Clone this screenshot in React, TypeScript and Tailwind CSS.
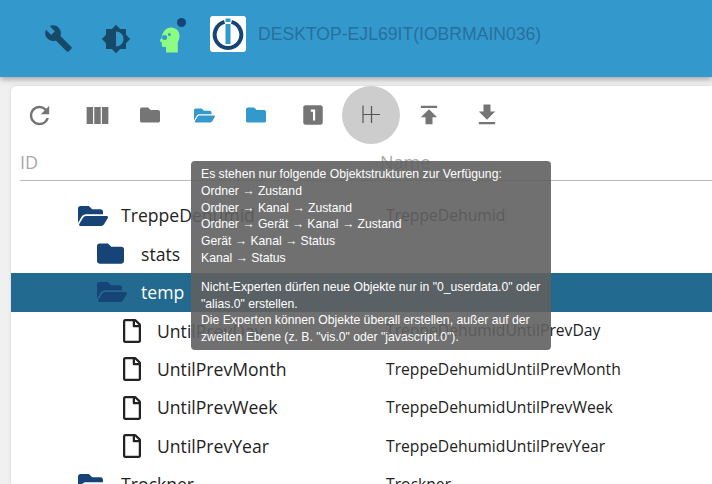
import { FaFolder, FaFolderOpen, FaRegFile } from "react-icons/fa";
import { MdRefresh, MdViewColumn, MdLooksOne, MdPublish, MdGetApp, MdBuild, MdBrightnessMedium } from "react-icons/md";

type RowT = { name: string; value?: string; kind: "open" | "folder" | "file"; level: 0 | 1 | 2; selected?: boolean };

const rows: RowT[] = [
  { name: "TreppeDehumid", value: "TreppeDehumid", kind: "open", level: 0 },
  { name: "stats", kind: "folder", level: 1 },
  { name: "temp", kind: "open", level: 1, selected: true },
  { name: "UntilPrevDay", value: "TreppeDehumidUntilPrevDay", kind: "file", level: 2 },
  { name: "UntilPrevMonth", value: "TreppeDehumidUntilPrevMonth", kind: "file", level: 2 },
  { name: "UntilPrevWeek", value: "TreppeDehumidUntilPrevWeek", kind: "file", level: 2 },
  { name: "UntilPrevYear", value: "TreppeDehumidUntilPrevYear", kind: "file", level: 2 },
  { name: "Trockner", value: "Trockner", kind: "open", level: 0 },
];

function RowIcon({ r }: { r: RowT }) {
  if (r.kind === "file") return <FaRegFile className="w-[24px] h-[24px] text-[#222]" />;
  if (r.kind === "folder") return <FaFolder className="w-[27px] h-[27px] text-[#164477]" />;
  return <FaFolderOpen className="w-[30px] h-[30px] text-[#164477]" />;
}

function Row({ r }: { r: RowT }) {
  const pad = r.level === 0 ? "pl-[67px]" : r.level === 1 ? "pl-[86px]" : "pl-[109px]";
  const iconW = r.level === 0 ? "w-[43px]" : r.level === 1 ? "w-[44px]" : "w-[37px]";
  return (
    <div className={`flex items-center h-[38.4px] shrink-0 ${r.selected ? "bg-[#226a8f] text-white" : "text-[#222]"}`}>
      <div className={`flex items-center w-[375px] shrink-0 ${pad}`}>
        <span className={`flex items-center shrink-0 ${iconW}`}><RowIcon r={r} /></span>
        <span className="text-[17.6px] font-['Open_Sans',sans-serif] whitespace-nowrap">{r.name}</span>
      </div>
      <span className="mt-[1px] text-[15.7px] font-['Open_Sans',sans-serif] whitespace-nowrap">{r.value}</span>
    </div>
  );
}

function ExpertHead() {
  return (
    <span className="relative flex w-[30px] h-[30px] items-center justify-center">
      <svg viewBox="0 0 20 26" className="w-[20px] h-[26px]">
        <path d="M6 25.5V20H3c-.8 0-1.2-.6-1.2-1.4v-3.2L.2 14.6 0 12.6l1.6-1C2 5 6 .5 11 .5c5 0 8.5 3.6 8.5 8.2 0 3.2-1 5.4-1.7 6.6V25.5z" fill="#8cfc83" />
        <circle cx="4.6" cy="10.6" r="2.5" fill="#3399cc" />
        <circle cx="9.4" cy="7.4" r="1.5" fill="#3399cc" />
      </svg>
      <span className="absolute left-[22px] top-[-7px] w-[9px] h-[9px] rounded-full bg-[#164477]" />
    </span>
  );
}

function Logo() {
  return (
    <span className="flex items-center justify-center w-[36px] h-[36px] rounded-[3px] bg-white">
      <svg viewBox="0 0 36 36" className="w-[36px] h-[36px]">
        <path d="M14.5 5.9A13.3 13.3 0 1 0 21.5 5.9" fill="none" stroke="#164477" strokeWidth="4" />
        <rect x="15.5" y="2.5" width="5" height="3.5" fill="#3399cc" />
        <rect x="15.5" y="8" width="5" height="20" fill="#3399cc" />
      </svg>
    </span>
  );
}

function ToolBtn({ children, w = "w-[58px]" }: { children: React.ReactNode; w?: string }) {
  return <button className={`flex items-center justify-center h-[58px] shrink-0 ${w}`}>{children}</button>;
}

const line = ["Ordner → Zustand", "Ordner → Kanal → Zustand", "Ordner → Gerät → Kanal → Zustand", "Gerät → Kanal → Status", "Kanal → Status"];

export default function App() {
  return (
    <div className="relative w-[712px] h-[484px] overflow-hidden bg-[#f0f0f0] font-['Liberation_Sans',sans-serif]">
      <header className="relative z-10 flex items-center h-[77px] pl-[29px] pb-[5px] bg-[#3399cc] shadow-[0_2px_6px_rgba(0,0,0,0.35)]">
        <span className="flex w-[58px] justify-center mt-[5px]"><MdBuild className="w-[29px] h-[29px] text-[#164a68]" /></span>
        <span className="flex w-[58px] justify-center mt-[5px]"><MdBrightnessMedium className="w-[30px] h-[30px] text-[#164a68]" /></span>
        <span className="flex w-[50px] justify-center mt-[7px]"><ExpertHead /></span>
        <span className="ml-[15px] mt-[-5px]"><Logo /></span>
        <span className="ml-[12px] mt-[-3px] text-[17.6px] text-[#27709c] whitespace-nowrap">DESKTOP-EJL69IT(IOBRMAIN036)</span>
      </header>

      <main className="ml-[11px] mt-[9px] h-[398px] rounded-tl-[5px] bg-white shadow-[0_0_3px_rgba(0,0,0,0.15)] flex flex-col">
        <div className="flex items-center h-[58px] shrink-0 ml-[-1px]">
          <ToolBtn><MdRefresh className="w-[29px] h-[29px] text-[#757575]" /></ToolBtn>
          <ToolBtn><MdViewColumn className="w-[29px] h-[29px] text-[#757575]" /></ToolBtn>
          <div className="flex items-center w-[158px]">
            <ToolBtn w="w-[46px] ml-[1px]"><FaFolder className="w-[20px] h-[20px] text-[#757575]" /></ToolBtn>
            <ToolBtn w="w-[46px] ml-[8px]"><FaFolderOpen className="w-[21px] h-[21px] text-[#3399cc]" /></ToolBtn>
            <ToolBtn w="w-[46px] ml-[6px]"><FaFolder className="w-[20px] h-[20px] text-[#3399cc]" /></ToolBtn>
          </div>
          <ToolBtn><MdLooksOne className="w-[26px] h-[26px] text-[#757575]" /></ToolBtn>
          <ToolBtn w="w-[58px] rounded-full bg-[#cdcdcd]">
            <svg viewBox="0 0 20 20" className="w-[20px] h-[20px]" fill="none" stroke="#555" strokeWidth="1.2">
              <path d="M2 .5V18M10.5 1V18M2 9.5H19" />
            </svg>
          </ToolBtn>
          <ToolBtn><MdPublish className="w-[28px] h-[28px] text-[#757575]" /></ToolBtn>
          <ToolBtn><MdGetApp className="w-[28px] h-[28px] text-[#757575]" /></ToolBtn>
        </div>

        <div className="flex items-center h-[37px] ml-[9px] border-b border-[#bbb] text-[18px] text-[#a8a8a8] shrink-0 font-['Open_Sans',sans-serif]">
          <span className="w-[360px] pt-[1px]">ID</span>
          <span>Name</span>
        </div>

        <div className="flex flex-col pt-[15.4px]">
          {rows.map((r) => <Row key={r.name} r={r} />)}
        </div>
      </main>

      <div className="absolute z-20 left-[191px] top-[161px] w-[360px] h-[189px] rounded-[4px] bg-[rgba(97,97,97,0.9)] pl-[10px] pr-[8px] pt-[5px] text-[12.2px] leading-[16.8px] text-white">
        <div>Es stehen nur folgende Objektstrukturen zur Verfügung:</div>
        {line.map((l) => <div key={l}>{l}</div>)}
        <div className="h-[12px]" />
        <div>Nicht-Experten dürfen neue Objekte nur in "0_userdata.0" oder "alias.0" erstellen.</div>
        <div>Die Experten können Objekte überall erstellen, außer auf der zweiten Ebene (z. B. "vis.0" oder "javascript.0").</div>
      </div>
    </div>
  );
}
